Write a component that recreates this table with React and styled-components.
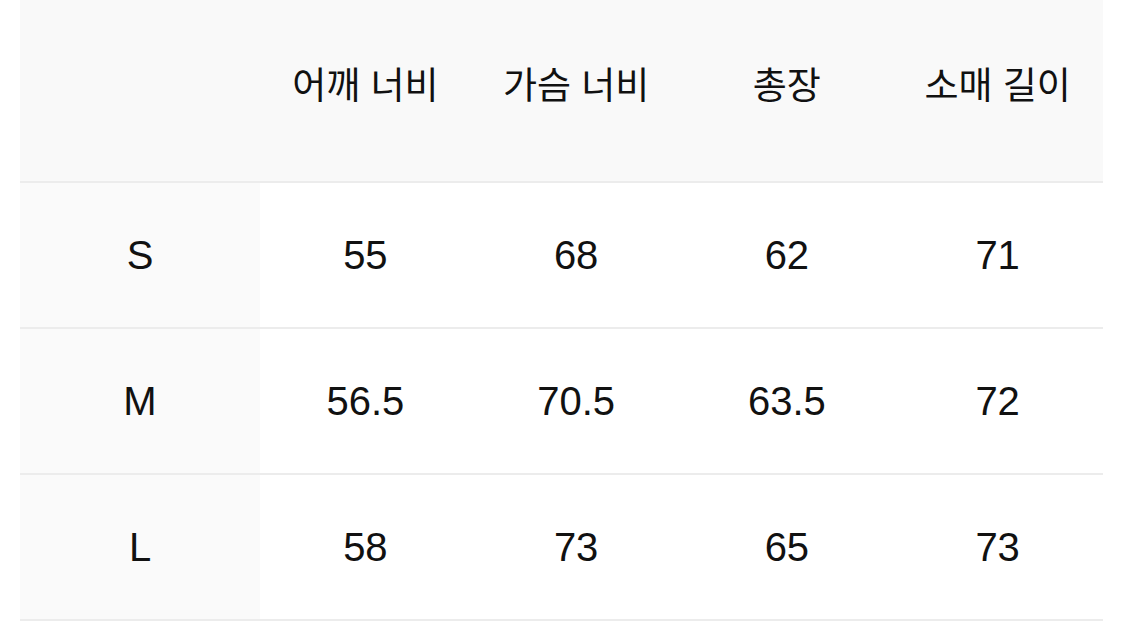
import React from "react";
import styled, { createGlobalStyle } from "styled-components";

const GlobalStyle = createGlobalStyle`
  html, body {
    margin: 0;
    padding: 0;
    background: #ffffff;
  }
  body {
    font-family: "Liberation Sans", "Noto Sans CJK KR", sans-serif;
    color: #111111;
  }
`;

const columns = ["어깨 너비", "가슴 너비", "총장", "소매 길이"];

const sizes = [
  { label: "S", values: ["55", "68", "62", "71"] },
  { label: "M", values: ["56.5", "70.5", "63.5", "72"] },
  { label: "L", values: ["58", "73", "65", "73"] },
];

const SizeChart = () => {
  return (
    <Wrapper>
      <HeaderRow>
        <HeadCell />
        {columns.map((c) => (
          <HeadCell key={c}>{c}</HeadCell>
        ))}
      </HeaderRow>
      {sizes.map((s) => (
        <Row key={s.label}>
          <LabelCell>{s.label}</LabelCell>
          {s.values.map((v, i) => (
            <Cell key={i}>{v}</Cell>
          ))}
        </Row>
      ))}
    </Wrapper>
  );
};

const Wrapper = styled.div`
  margin-left: 20px;
  width: 1083px;
  display: flex;
  flex-direction: column;
`;

const HeaderRow = styled.div`
  display: grid;
  grid-template-columns: 240px repeat(4, 1fr);
  height: 181px;
  background: #f9f9f9;
  border-bottom: 2px solid #ececec;
`;

const Row = styled.div`
  display: grid;
  grid-template-columns: 240px repeat(4, 1fr);
  height: 144px;
  border-bottom: 2px solid #ececec;
`;

const HeadCell = styled.div`
  display: flex;
  align-items: center;
  justify-content: center;
  font-size: 37px;
  padding-bottom: 16px;
`;

const LabelCell = styled.div`
  display: flex;
  align-items: center;
  justify-content: center;
  background: #fafafa;
  font-size: 40px;
`;

const Cell = styled.div`
  display: flex;
  align-items: center;
  justify-content: center;
  font-size: 40px;
`;

export default function App() {
  return (
    <>
      <GlobalStyle />
      <SizeChart />
    </>
  );
}
